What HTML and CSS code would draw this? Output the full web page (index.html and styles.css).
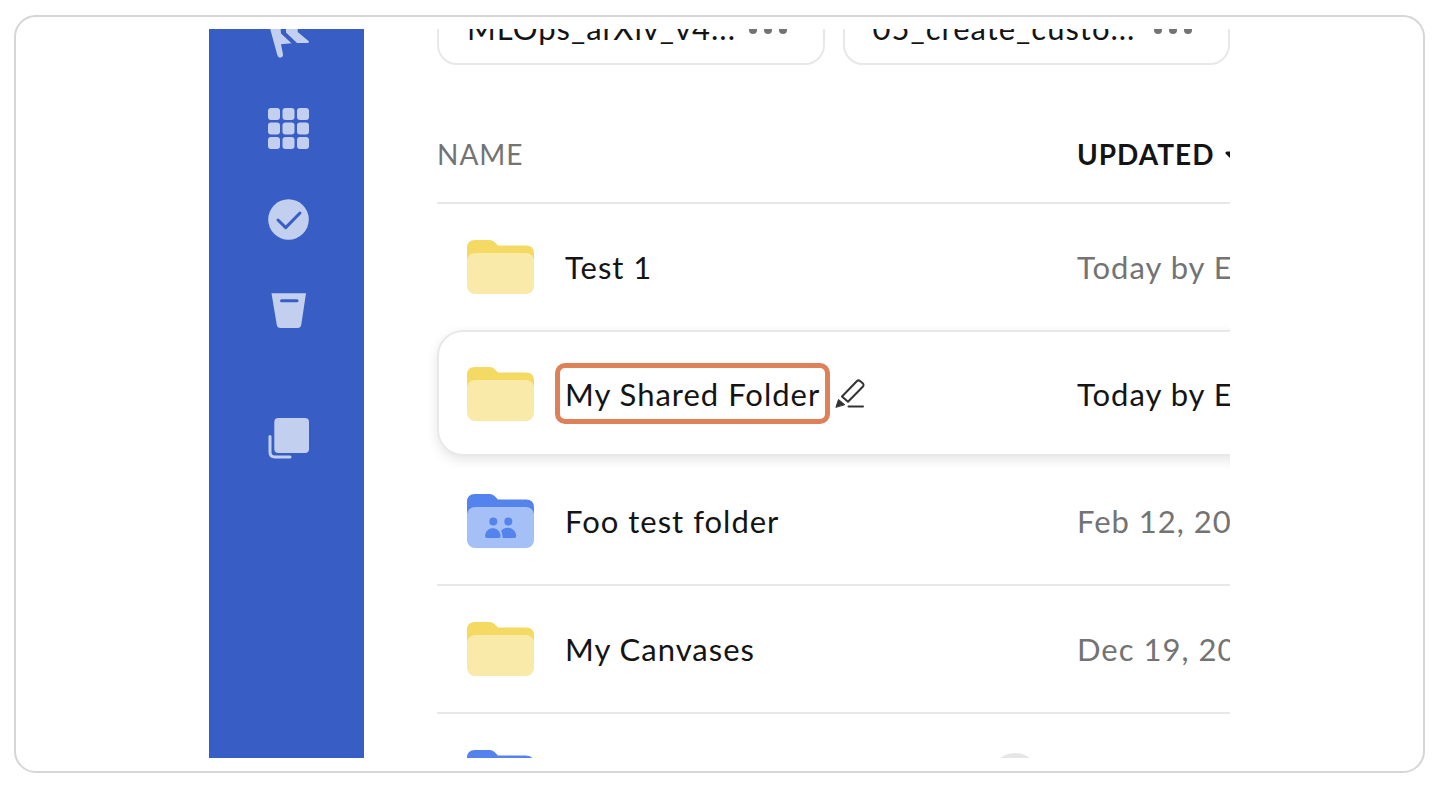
FILE: index.html
```html
<!DOCTYPE html>
<html lang="en">
<head>
    <meta charset="UTF-8">
    <meta name="viewport" content="width=device-width, initial-scale=1.0">
    <title>Folders</title>
    <link rel="stylesheet" href="styles.css">
</head>
<body>
    <!-- Shared folder shapes -->
    <svg class="defs" width="0" height="0" aria-hidden="true">
        <symbol id="folder" viewBox="0 0 67 54">
            <path class="folder-back" d="M0 20V8Q0 0 8 0H23Q26 0 28 2.500L31 5.500H59Q67 5.500 67 13.500V20Z"/>
            <rect class="folder-front" y="13" width="67" height="41" rx="8"/>
        </symbol>
        <symbol id="people" viewBox="0 0 67 54">
            <circle cx="26.300" cy="27.400" r="4"/>
            <circle cx="41.300" cy="27.400" r="4"/>
            <path d="M20 44Q18 44 18 42C19 31.500 32.500 31.500 33.700 42Q33.700 44 31.700 44Z"/>
            <path d="M36 44Q35.200 43.500 35.500 42.500Q35.500 39 34 37C38 31.500 48.500 33 49.300 42Q49.300 44 47.300 44Z"/>
        </symbol>
    </svg>

    <div class="frame">
        <div class="screen">
            <nav class="sidebar">
                <button class="nav-button" aria-label="Home">
                    <svg viewBox="0 0 41 41"><path d="M0 4L9.300 38Q10.200 41 12.700 40.600Q15.300 40 15 37.500L13 27.300L23.500 26.300L13 16.500L12 4Z"/><path d="M18 4V15.500L28.500 25.500Q29 26 30 26H39Q42 26 40.500 24L29.700 15V4Z"/></svg>
                </button>
                <button class="nav-button" aria-label="Apps">
                    <svg viewBox="0 0 41 41">
                        <rect width="12" height="12" rx="3"/><rect x="14.500" width="12" height="12" rx="3"/><rect x="29" width="12" height="12" rx="3"/>
                        <rect y="14.500" width="12" height="12" rx="3"/><rect x="14.500" y="14.500" width="12" height="12" rx="3"/><rect x="29" y="14.500" width="12" height="12" rx="3"/>
                        <rect y="29" width="12" height="12" rx="3"/><rect x="14.500" y="29" width="12" height="12" rx="3"/><rect x="29" y="29" width="12" height="12" rx="3"/>
                    </svg>
                </button>
                <button class="nav-button" aria-label="Tasks">
                    <svg viewBox="0 0 41 41"><circle cx="20.500" cy="20.500" r="20.300"/><path class="cut" d="M10 21L17.700 28.600L32 14"/></svg>
                </button>
                <button class="nav-button" aria-label="Trash">
                    <svg viewBox="0 0 41 41"><path d="M3.500 3.300H38L33.300 34.500Q32.700 38 29.500 38H12.500Q9.200 38 8.700 34.500Z"/><path class="cut" d="M13.500 10.700H29"/></svg>
                </button>
                <button class="nav-button nav-button-last" aria-label="Collections">
                    <svg viewBox="0 0 41 41"><rect x="6.300" width="34.700" height="35" rx="4"/><path class="line" d="M2 18.500V34Q2 39 7 39H22"/></svg>
                </button>
            </nav>

            <main class="content">
                <div class="cards">
                    <div class="card">
                        <span>MLOps_arXiv_v4...</span>
                        <button class="more" aria-label="More options"><i></i><i></i><i></i></button>
                    </div>
                    <div class="card">
                        <span>05_create_custo...</span>
                        <button class="more" aria-label="More options"><i></i><i></i><i></i></button>
                    </div>
                </div>

                <table class="files">
                    <thead>
                        <tr class="head">
                            <th class="name">Name</th>
                            <th class="updated sorted">Updated
                                <svg class="caret" viewBox="0 0 16 10"><path d="M3 4H13L8 9Z"/></svg>
                            </th>
                        </tr>
                    </thead>
                    <tbody>
                        <tr class="row">
                            <td class="name"><svg class="folder yellow"><use href="#folder"/></svg><span>Test 1</span></td>
                            <td class="updated">Today by E</td>
                        </tr>
                        <tr class="row selected">
                            <td class="name">
                                <svg class="folder yellow"><use href="#folder"/></svg>
                                <span class="highlight">My Shared Folder</span>
                                <button class="edit" aria-label="Rename">
                                    <svg viewBox="0 0 30 30"><path class="tip" d="M1 28L3.500 20.500L9.500 25.500Z"/><path d="M7 17.500L22 2Q23.500 0.800 25 2L28 4.500Q29 6 28 7.500L13 22.800Z"/><path d="M13.500 27.500H28"/></svg>
                                </button>
                            </td>
                            <td class="updated">Today by E</td>
                        </tr>
                        <tr class="row">
                            <td class="name"><svg class="folder blue"><use href="#folder"/><use class="people" href="#people"/></svg><span>Foo test folder</span></td>
                            <td class="updated">Feb 12, 20</td>
                        </tr>
                        <tr class="row">
                            <td class="name"><svg class="folder yellow"><use href="#folder"/></svg><span>My Canvases</span></td>
                            <td class="updated">Dec 19, 20</td>
                        </tr>
                        <tr class="row">
                            <td class="name"><svg class="folder blue"><use href="#folder"/><use class="people" href="#people"/></svg><span class="avatar"></span></td>
                            <td class="updated"></td>
                        </tr>
                    </tbody>
                </table>
            </main>
        </div>
    </div>
</body>
</html>
```

FILE: styles.css
```css
* {
    margin: 0;
    padding: 0;
    box-sizing: border-box;
}

body {
    height: 100vh;
    padding: 15px 13px 15px 14px;
    background-color: #fff;
    color: #141414;
    font-family: Lato, 'Liberation Sans', sans-serif;
    font-size: 31px;
    line-height: 38px;
    letter-spacing: 1px;
}

button {
    border: none;
    background: none;
    cursor: pointer;
}

svg {
    display: block;
}

.defs {
    position: absolute;
}

.frame {
    height: 100%;
    padding: 12px 12px 13px;
    border: 2px solid #d6d6d6;
    border-radius: 22px;
}

.screen {
    display: flex;
    height: 100%;
    max-width: 1021px;
    margin: 0 auto;
    overflow: hidden;
}

/* Sidebar */
.sidebar {
    flex: 0 0 155px;
    display: flex;
    flex-direction: column;
    align-items: center;
    gap: 50px;
    padding-left: 4px;
    background-color: #385ec6;
}

.nav-button {
    width: 41px;
    height: 41px;
    flex-shrink: 0;
}

.nav-button:first-child {
    margin-top: -12px;
}

.nav-button-last {
    margin-top: 37px;
}

.nav-button svg {
    width: 41px;
    height: 41px;
    fill: #c3cfef;
}

.nav-button .cut,
.nav-button .line {
    fill: none;
    stroke: #385ec6;
    stroke-width: 3;
    stroke-linecap: round;
    stroke-linejoin: round;
}

.nav-button .line {
    stroke: #c3cfef;
}

/* Content */
.content {
    flex: 1;
    min-width: 0;
    padding-left: 73px;
    overflow: hidden;
    white-space: nowrap;
}

.cards {
    display: flex;
    gap: 18px;
    margin-top: -32px;
}

.card {
    flex: 1;
    display: flex;
    justify-content: space-between;
    align-items: center;
    padding: 10px 36px 16px 28px;
    border: 2px solid #e8e8e8;
    border-radius: 20px;
}

.more {
    display: flex;
    gap: 7px;
    padding-top: 4px;
}

.more i {
    width: 8px;
    height: 8px;
    border-radius: 50%;
    background-color: #737373;
}

/* File list */
.files,
.files thead,
.files tbody {
    display: block;
}

.files {
    width: 1000px;
}

.head,
.row {
    display: flex;
    align-items: center;
}

.head {
    padding: 72px 0 31px;
    font-size: 28px;
    line-height: 34px;
    text-transform: uppercase;
}

.head th {
    color: #737373;
    font-weight: 400;
    text-align: left;
}

.head .sorted {
    display: flex;
    align-items: center;
    gap: 10px;
    color: #141414;
    font-weight: 700;
}

.caret {
    width: 16px;
    height: 10px;
    fill: #141414;
    stroke: #141414;
    stroke-width: 3;
    stroke-linejoin: round;
}

.name {
    flex: 0 0 640px;
}

.row {
    height: 128px;
    border-top: 2px solid #e8e8e8;
}

.row .name {
    display: flex;
    align-items: center;
    padding-left: 30px;
}

.row .updated {
    color: #737373;
}

.selected {
    height: 126px;
    padding-top: 2px;
    border: 2px solid #e8e8e8;
    border-radius: 26px;
    box-shadow: 0 4px 12px rgba(0, 0, 0, 0.1);
}

.selected .name {
    flex-basis: 638px;
    padding-left: 28px;
}

.selected .updated {
    color: #141414;
}

.selected + .row {
    border-top-color: transparent;
}

.folder {
    width: 67px;
    height: 54px;
    margin-right: 31px;
}

.yellow {
    --back: #f4d962;
    --front: #f9eaaa;
}

.blue {
    --back: #5583ed;
    --front: #a4c0f6;
}

.folder-back,
.people {
    fill: var(--back);
}

.folder-front {
    fill: var(--front);
}

.highlight {
    position: relative;
}

.highlight::after {
    content: "";
    position: absolute;
    inset: -12px -10px -11px;
    border: 5px solid #df8158;
    border-radius: 10px;
}

.edit {
    width: 30px;
    height: 30px;
    margin-left: 15px;
}

.edit svg {
    fill: none;
    stroke: #333;
    stroke-width: 2;
    stroke-linecap: round;
    stroke-linejoin: round;
}

.edit .tip {
    fill: #333;
    stroke-width: 1;
}

.avatar {
    width: 48px;
    height: 48px;
    margin-left: auto;
    margin-right: 38px;
    border-radius: 50%;
    background-color: #e6e6e6;
}
```
